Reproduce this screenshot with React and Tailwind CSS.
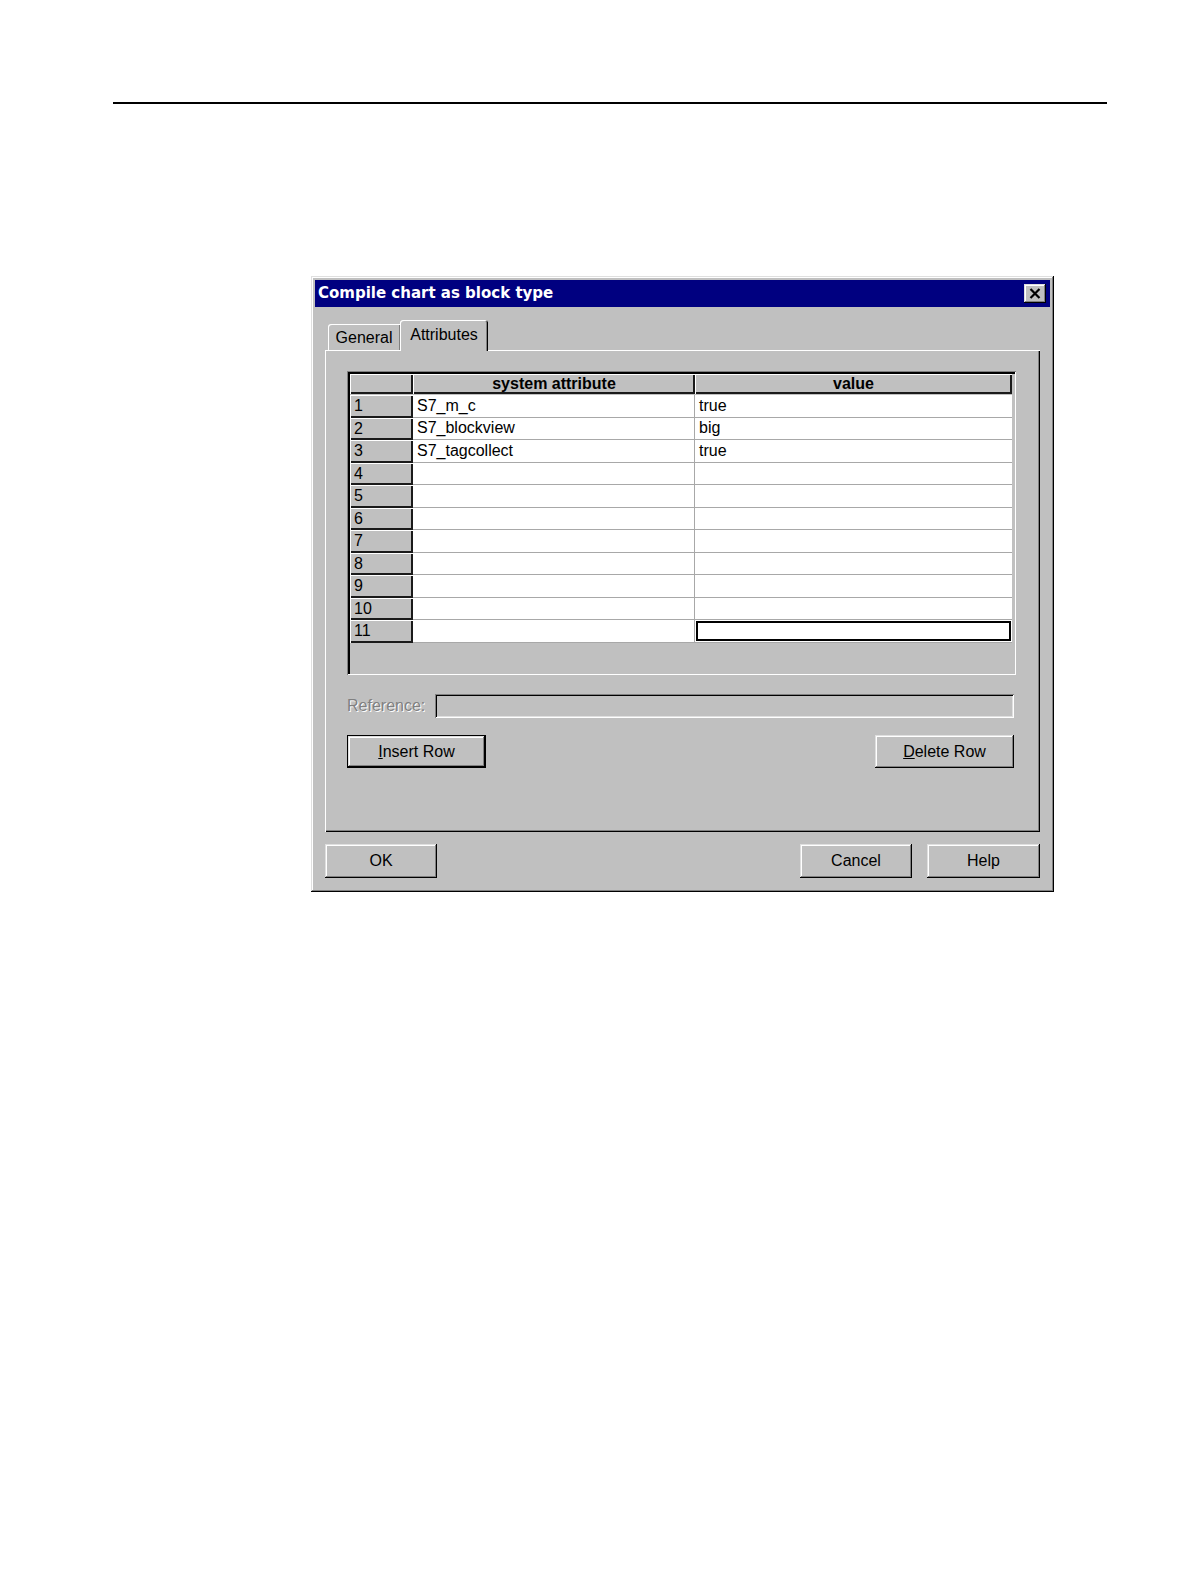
import React from 'react';

const raised =
  'shadow-[inset_-1px_-1px_0_#000,inset_1px_1px_0_#dfdfdf,inset_-2px_-2px_0_#808080,inset_2px_2px_0_#fff]';
const sunken =
  'shadow-[inset_1px_1px_0_#808080,inset_-1px_-1px_0_#fff,inset_2px_2px_0_#000,inset_-2px_-2px_0_#dfdfdf]';

const rows = [
  ['S7_m_c', 'true'],
  ['S7_blockview', 'big'],
  ['S7_tagcollect', 'true'],
  ['', ''],
  ['', ''],
  ['', ''],
  ['', ''],
  ['', ''],
  ['', ''],
  ['', ''],
  ['', ''],
];

const Button = ({ children, className = '', isDefault = false }) => (
  <div
    className={
      'flex items-center justify-center bg-[#c0c0c0] text-[16px] text-black ' +
      (isDefault ? 'border border-black ' : '') +
      className
    }
  >
    <div className={'flex h-full w-full items-center justify-center ' + raised}>{children}</div>
  </div>
);

const HeaderCell = ({ children, className = '' }) => (
  <div
    className={
      'flex h-[20px] items-center bg-[#c0c0c0] shadow-[inset_1px_1px_0_#fff,inset_-2px_-2px_0_#1a1a1a] ' +
      className
    }
  >
    {children}
  </div>
);

export default function App() {
  return (
    <div
      className="w-full bg-white pb-[100px] pt-[102px]"
      style={{ fontFamily: '"Liberation Sans", Arial, sans-serif' }}
    >
      <div className="ml-[113px] h-[2px] w-[994px] bg-black" />

      {/* dialog */}
      <div className={'ml-[311px] mt-[172px] flex h-[616px] w-[743px] flex-col bg-[#c0c0c0] p-[4px] ' + raised}>
        {/* title bar */}
        <div className="flex h-[27px] items-center justify-between bg-[#000080] pl-[3px] pr-[4px]">
          <span
            className="text-[15px] font-bold text-white"
            style={{ fontFamily: '"DejaVu Sans", Verdana, sans-serif' }}
          >
            Compile chart as block type
          </span>
          <div className={'flex h-[19px] w-[22px] items-center justify-center bg-[#c0c0c0] ' + raised}>
            <svg width="12" height="11" viewBox="0 0 12 11">
              <path d="M1.5 1 L10.5 10 M10.5 1 L1.5 10" stroke="#000" strokeWidth="2.2" />
            </svg>
          </div>
        </div>

        {/* tab area */}
        <div className="flex flex-col px-[10px] pt-[13px]">
          <div className="relative z-10 flex items-end pl-[3px]">
            <div className="flex h-[26px] w-[72px] items-center justify-center rounded-tl-[3px] bg-[#c0c0c0] pt-[1px] text-[16px] shadow-[inset_1px_1px_0_#fff,inset_-1px_0_0_#808080]">
              General
            </div>
            <div className="-mb-[1px] flex h-[31px] w-[88px] items-start justify-center rounded-tl-[3px] rounded-tr-[3px] bg-[#c0c0c0] pt-[3px] text-[16px] shadow-[inset_1px_1px_0_#fff,inset_-1px_0_0_#000,inset_-2px_0_0_#808080]">
              Attributes
            </div>
          </div>

          {/* panel */}
          <div
            className={
              'flex h-[482px] flex-col px-[22px] pt-[21px] ' +
              'shadow-[inset_1px_1px_0_#fff,inset_-1px_-1px_0_#000,inset_-2px_-2px_0_#808080]'
            }
          >
            {/* grid */}
            <div
              className={
                'flex h-[304px] w-[669px] flex-col pl-[3px] pt-[3px] ' +
                'shadow-[inset_1px_1px_0_#808080,inset_-1px_-1px_0_#fff,inset_3px_3px_0_#000]'
              }
            >
              <div className="flex">
                <HeaderCell className="w-[63px]" />
                <HeaderCell className="w-[282px] justify-center pb-[1px] text-[16px] font-bold">
                  system attribute
                </HeaderCell>
                <HeaderCell className="w-[317px] justify-center pb-[1px] text-[16px] font-bold">
                  value
                </HeaderCell>
              </div>
              <div className="h-[1px]" />
              {rows.map(([attr, val], i) => (
                <div key={i} className="flex h-[22.5px]">
                  <div className="flex w-[63px] items-center bg-[#c0c0c0] pl-[4px] text-[16px] shadow-[inset_1px_1px_0_#fff,inset_-2px_-2px_0_#1a1a1a]">
                    {i + 1}
                  </div>
                  <div className="flex w-[282px] items-center border-b border-r border-[#a8a8a8] bg-white pl-[4px] text-[16px]">
                    {attr}
                  </div>
                  {i === 10 ? (
                    <div className="w-[317px] border-b border-[#a8a8a8] bg-white">
                      <div className="mx-[1px] mt-[1px] h-[20px] border-2 border-black bg-white" />
                    </div>
                  ) : (
                    <div className="flex w-[317px] items-center border-b border-[#a8a8a8] bg-white pl-[4px] text-[16px]">
                      {val}
                    </div>
                  )}
                </div>
              ))}
            </div>

            {/* reference */}
            <div className="mt-[19px] flex items-center">
              <span className="w-[88px] text-[16px] text-[#808080] [text-shadow:1px_1px_0_#fff]">
                Reference:
              </span>
              <div className={'h-[24px] w-[579px] bg-[#c0c0c0] ' + sunken} />
            </div>

            {/* row buttons */}
            <div className="mt-[17px] flex w-[667px] justify-between">
              <Button className="h-[33px] w-[139px]" isDefault>
                <span>
                  <span className="underline">I</span>nsert Row
                </span>
              </Button>
              <Button className="h-[33px] w-[139px]">
                <span>
                  <span className="underline">D</span>elete Row
                </span>
              </Button>
            </div>
          </div>

          {/* dialog buttons */}
          <div className="mt-[12px] flex">
            <Button className="h-[34px] w-[112px]">OK</Button>
            <div className="flex-1" />
            <Button className="h-[34px] w-[112px]">Cancel</Button>
            <Button className="ml-[15px] h-[34px] w-[113px]">Help</Button>
          </div>
        </div>
      </div>
    </div>
  );
}
